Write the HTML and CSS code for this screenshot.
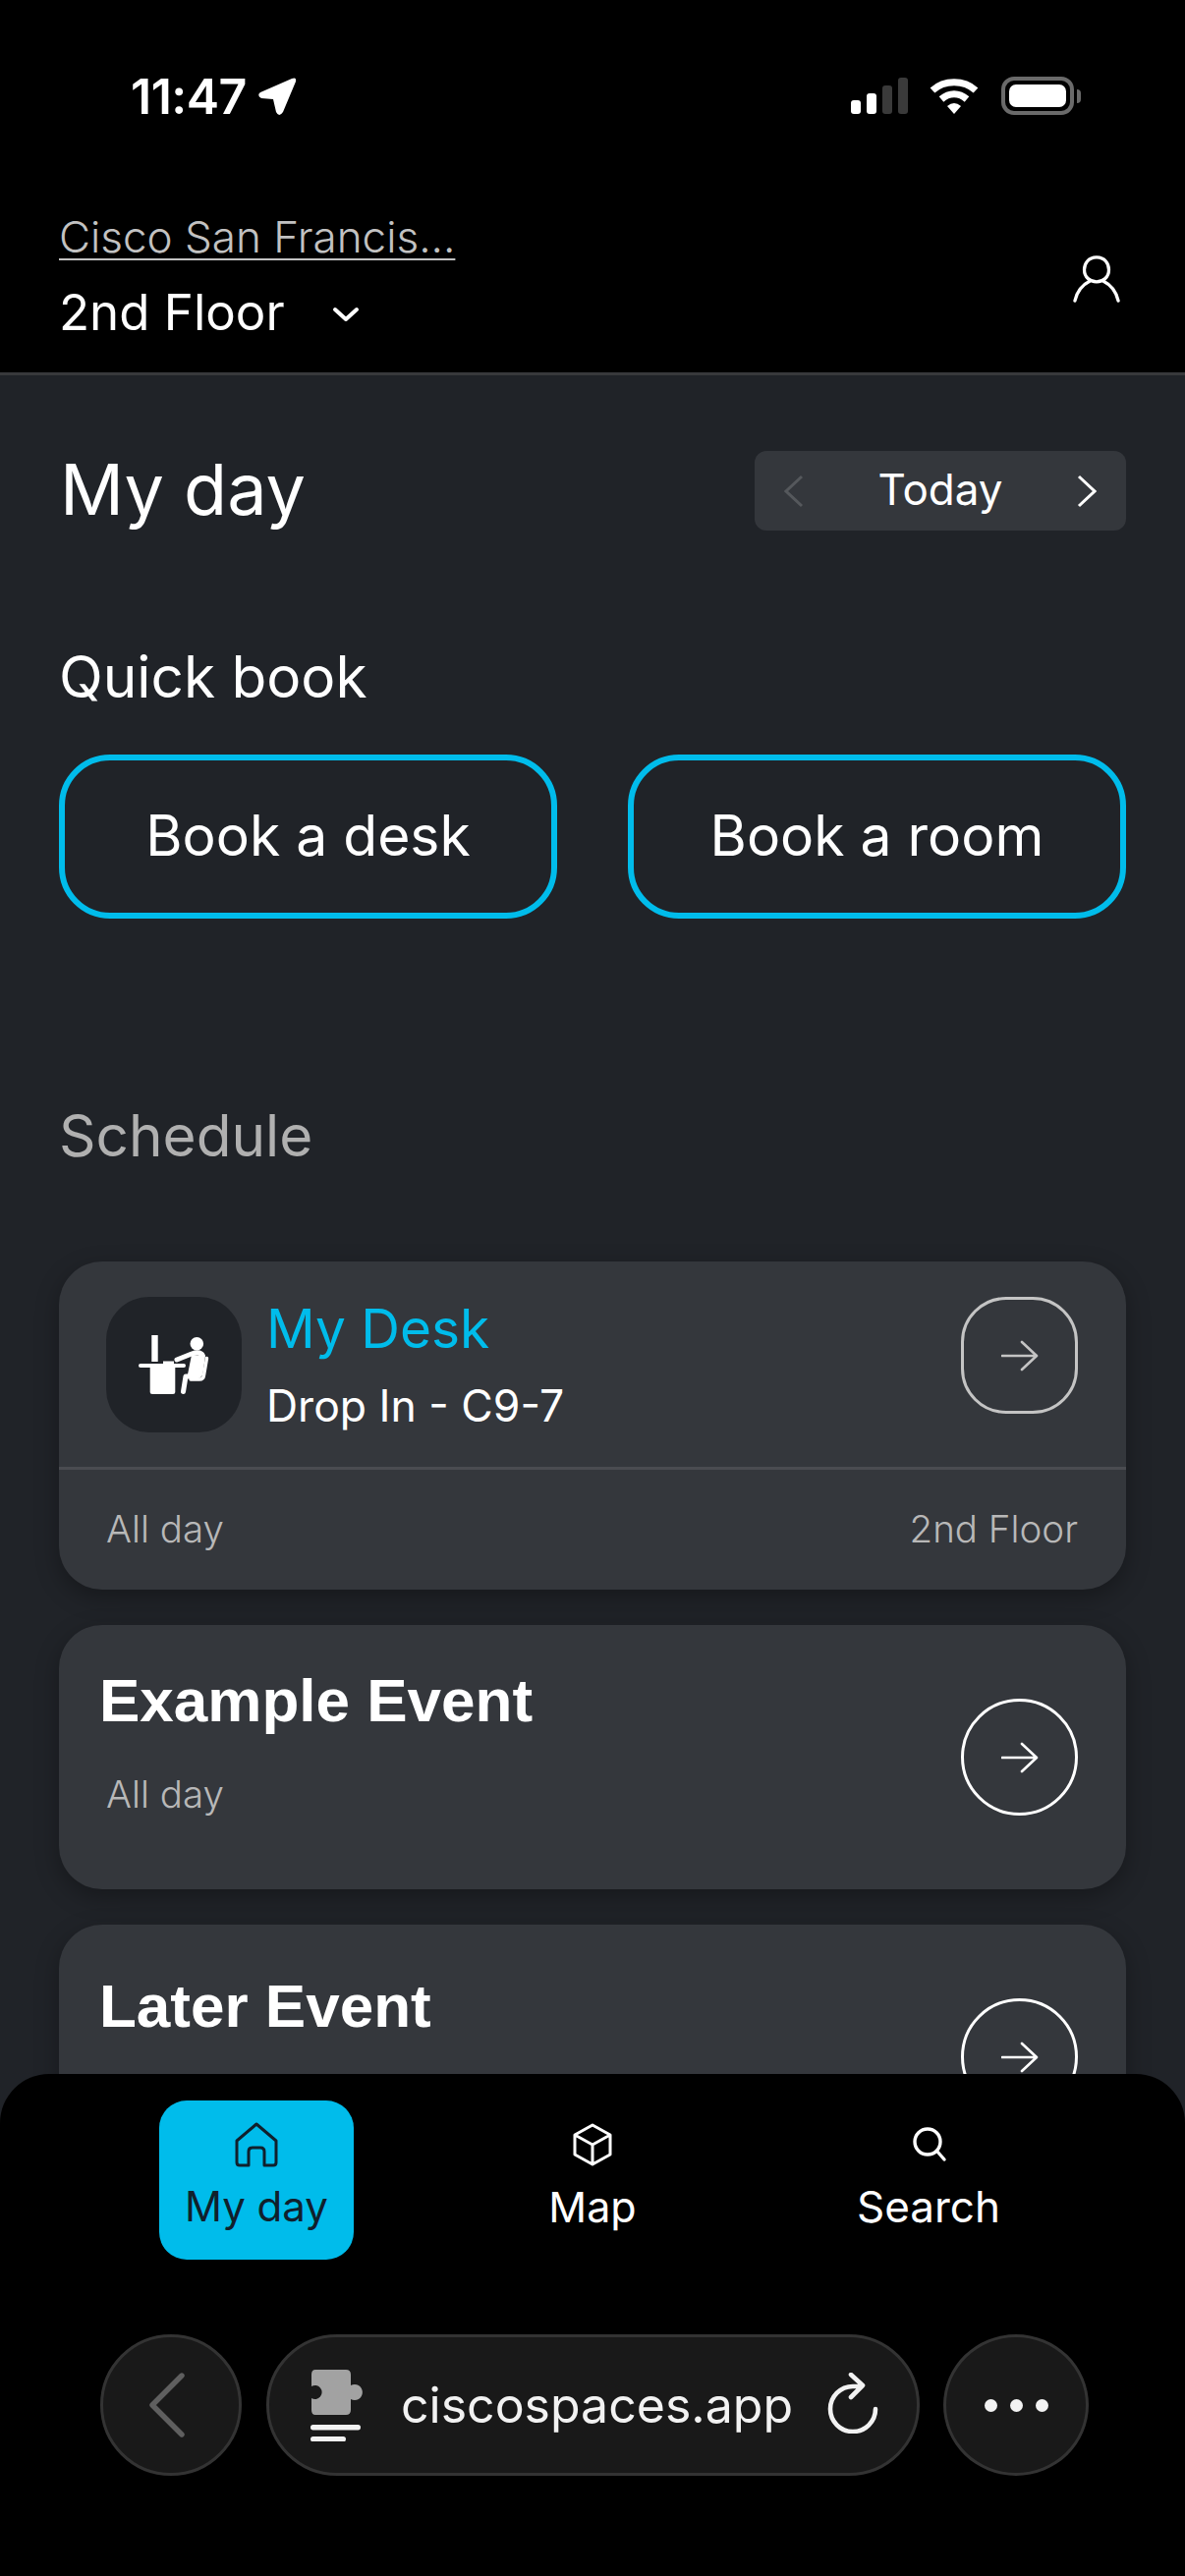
FILE: index.html
```html
<!DOCTYPE html>
<html lang="en">
<head>
    <meta charset="UTF-8">
    <meta name="viewport" content="width=device-width, initial-scale=1.0">
    <title>My day</title>
    <link rel="stylesheet" href="styles.css">
</head>
<body>
    <div class="phone">
        <header class="top">
            <div class="status">
                <div class="status-left">
                    <span class="clock">11:47</span>
                    <svg class="loc-arrow" viewBox="0 0 39 39"><path d="M2 15 L34 1 Q39 -1 38 4 L25 35 Q21 41 18 35 L15 22 L3 21 Q-2 18 2 15Z" fill="#fff"/></svg>
                </div>
                <div class="status-right">
                    <svg class="signal" viewBox="0 0 58 37">
                        <rect x="0" y="23" width="10" height="14" rx="3" fill="#fff"/>
                        <rect x="16" y="16" width="10" height="21" rx="3" fill="#fff"/>
                        <rect x="32" y="8" width="10" height="29" rx="3" fill="#3a3a3a"/>
                        <rect x="48" y="0" width="10" height="37" rx="3" fill="#3a3a3a"/>
                    </svg>
                    <svg class="wifi" viewBox="0 0 50 37">
                        <path d="M3 13 C15 2 35 2 47 13" fill="none" stroke="#fff" stroke-width="7"/>
                        <path d="M12 22 C20 15 30 15 38 22" fill="none" stroke="#fff" stroke-width="7"/>
                        <path d="M18 29 Q25 23 32 29 L25 37Z" fill="#fff"/>
                    </svg>
                    <div class="battery"><div class="battery-fill"></div></div>
                    <div class="battery-nub"></div>
                </div>
            </div>
            <div class="place-row">
                <div class="place">
                    <a class="site">Cisco San Francis...</a>
                    <div class="floor">
                        <span>2nd Floor</span>
                        <svg class="chevron" viewBox="0 0 28 16"><path d="M3 3 L14 13 L25 3" fill="none" stroke="#fff" stroke-width="4" stroke-linecap="round" stroke-linejoin="round"/></svg>
                    </div>
                </div>
                <svg class="user" viewBox="0 0 50 50"><path d="M25 2 C16 2 12 9 12 15 C12 23 18 28 25 28 C32 28 38 23 38 15 C38 9 34 2 25 2Z M18 27 C10 31 4 39 2 48 M32 27 C40 31 46 39 48 48" fill="none" stroke="#fff" stroke-width="3.4" stroke-linecap="round"/></svg>
            </div>
        </header>

        <main class="content">
            <div class="day-row">
                <h1>My day</h1>
                <div class="day-switch">
                    <svg class="day-arrow" viewBox="0 0 20 34"><path d="M18 2 L2 17 L18 32" fill="none" stroke="#55585c" stroke-width="3"/></svg>
                    <span class="day-label">Today</span>
                    <svg class="day-arrow" viewBox="0 0 20 34"><path d="M2 2 L18 17 L2 32" fill="none" stroke="#fff" stroke-width="3"/></svg>
                </div>
            </div>

            <h2 class="quick-title">Quick book</h2>
            <div class="quick-btns">
                <button class="quick-btn">Book a desk</button>
                <button class="quick-btn">Book a room</button>
            </div>

            <h2 class="schedule-title">Schedule</h2>

            <div class="card desk-card">
                <div class="desk-main">
                    <div class="desk-tile">
                        <svg viewBox="0 0 138 138">
                            <rect x="46.3" y="39" width="6.4" height="27" fill="#fff"/>
                            <rect x="33" y="68" width="48" height="4" rx="2" fill="#fff"/>
                            <rect x="58" y="65.5" width="11" height="3" fill="#fff"/>
                            <path d="M44.7 71 H70.3 V97 Q70.3 99 68 99 H47 Q44.7 99 44.7 97Z" fill="#fff"/>
                            <circle cx="92.3" cy="47.7" r="6.8" fill="#fff"/>
                            <path d="M72 64 L87 58 Q96 55 98.5 60 L96 78 Q95 81 91 81 H81 L78.5 96.5" fill="none" stroke="#fff" stroke-width="5" stroke-linecap="round" stroke-linejoin="round"/>
                            <path d="M87 59 L97 60 L94 79 H83 Z" fill="#fff"/>
                            <path d="M102.5 62.5 L99.5 80 Q99 84 95 84 H86" fill="none" stroke="#fff" stroke-width="3.4" stroke-linecap="round"/>
                        </svg>
                    </div>
                    <div class="desk-text">
                        <div class="desk-name">My Desk</div>
                        <div class="desk-seat">Drop In - C9-7</div>
                    </div>
                    <div class="go go-square">
                        <svg viewBox="0 0 38 32"><path d="M1 16 H35 M21 2 L36 16 L21 30" fill="none" stroke="#c4c4c4" stroke-width="2.6" stroke-linecap="round" stroke-linejoin="round"/></svg>
                    </div>
                </div>
                <div class="desk-foot">
                    <span>All day</span>
                    <span>2nd Floor</span>
                </div>
            </div>

            <div class="card event-card">
                <div class="event-text">
                    <div class="event-name">Example Event</div>
                    <div class="event-time">All day</div>
                </div>
                <div class="go go-round">
                    <svg viewBox="0 0 38 32"><path d="M1 16 H35 M21 2 L36 16 L21 30" fill="none" stroke="#fff" stroke-width="2.6" stroke-linecap="round" stroke-linejoin="round"/></svg>
                </div>
            </div>

            <div class="card event-card later">
                <div class="event-text">
                    <div class="event-name">Later Event</div>
                    <div class="event-time">All day</div>
                </div>
                <div class="go go-round">
                    <svg viewBox="0 0 38 32"><path d="M1 16 H35 M21 2 L36 16 L21 30" fill="none" stroke="#fff" stroke-width="2.6" stroke-linecap="round" stroke-linejoin="round"/></svg>
                </div>
            </div>
        </main>

        <div class="bottom">
            <nav class="tabs">
                <div class="tab active">
                    <svg viewBox="0 0 44 46"><path d="M22 2 L42 19 V41 Q42 44 39 44 H30 V30 Q30 26 26 26 H18 Q14 26 14 30 V44 H5 Q2 44 2 41 V19Z" fill="none" stroke="#10202c" stroke-width="3" stroke-linejoin="round"/></svg>
                    <span>My day</span>
                </div>
                <div class="tab">
                    <svg viewBox="0 0 44 46"><path d="M22 3 L40 13 V33 L22 43 L4 33 V13Z M4 13 L22 23 L40 13 M22 23 V43" fill="none" stroke="#fff" stroke-width="3" stroke-linejoin="round"/></svg>
                    <span>Map</span>
                </div>
                <div class="tab">
                    <svg viewBox="0 0 44 46"><circle cx="21" cy="20" r="13" fill="none" stroke="#fff" stroke-width="3.4"/><path d="M31 30 L38 38" stroke="#fff" stroke-width="3.4" stroke-linecap="round"/></svg>
                    <span class="search-label">Search</span>
                </div>
            </nav>
            <div class="browser">
                <div class="round-btn back">
                    <svg viewBox="0 0 36 66"><path d="M33 3 L3 33 L33 63" fill="none" stroke="#5f5f5f" stroke-width="5.4" stroke-linecap="round" stroke-linejoin="round"/></svg>
                </div>
                <div class="url-pill">
                    <svg class="puzzle" viewBox="0 0 53 73">
                        <path d="M5 0 H36 Q41 0 41 5 V16 A8 8 0 1 1 41 30 V41 Q41 46 36 46 H5 Q1 46 1 41 V29 A7 7 0 1 0 1 17 V5 Q1 0 5 0Z" fill="#a2a2a2"/>
                        <rect x="0" y="56" width="51" height="5.5" rx="2.7" fill="#f2f2f2"/>
                        <rect x="0" y="68" width="36" height="5.5" rx="2.7" fill="#f2f2f2"/>
                    </svg>
                    <span class="url">ciscospaces.app</span>
                    <svg class="reload" viewBox="0 0 52 62"><path d="M49 37 A23 23 0 1 1 26 14 H32 M24 2 L36 13 L24 25" fill="none" stroke="#f2f2f2" stroke-width="4.6" stroke-linecap="round" stroke-linejoin="round"/></svg>
                </div>
                <div class="round-btn more">
                    <span class="dot"></span><span class="dot"></span><span class="dot"></span>
                </div>
            </div>
        </div>
    </div>
</body>
</html>
```

FILE: styles.css
```css
html, body {
    margin: 0;
    padding: 0;
    background: #000;
}

.phone {
    width: 1206px;
    height: 2622px;
    position: relative;
    overflow: hidden;
    display: flex;
    flex-direction: column;
    font-family: 'Inter', 'Liberation Sans', sans-serif;
    color: #fff;
    background: #202328;
}

/* Top bar */
.top {
    background: #000;
    height: 382px;
    box-sizing: border-box;
    border-bottom: 3px solid #38393c;
    flex-shrink: 0;
}

.status {
    height: 216px;
    box-sizing: border-box;
    padding: 78px 106px 0 133px;
    display: flex;
    justify-content: space-between;
    align-items: flex-start;
}

.status-left {
    display: flex;
    align-items: center;
    gap: 12px;
}

.clock {
    font-size: 50px;
    line-height: 40px;
    font-weight: 600;
    letter-spacing: -0.5px;
}

.loc-arrow {
    width: 39px;
    height: 39px;
}

.status-right {
    display: flex;
    align-items: center;
}

.signal {
    width: 58px;
    height: 37px;
}

.wifi {
    width: 50px;
    height: 37px;
    margin-left: 22px;
}

.battery {
    width: 74px;
    height: 39px;
    box-sizing: border-box;
    margin-left: 23px;
    border: 4px solid #6a6a6a;
    border-radius: 13px;
    padding: 4px;
}

.battery-fill {
    height: 100%;
    background: #fff;
    border-radius: 7px;
}

.battery-nub {
    width: 4px;
    height: 14px;
    margin-left: 3px;
    background: #6a6a6a;
    border-radius: 0 4px 4px 0;
}

.place-row {
    padding: 0 65px 0 60px;
    display: flex;
    justify-content: space-between;
    align-items: center;
}

.site {
    display: block;
    font-size: 44px;
    line-height: 50px;
    font-weight: 300;
    color: #c2c2c2;
    text-decoration: underline;
    text-decoration-thickness: 2px;
    text-underline-offset: 6px;
}

.floor {
    margin-top: 27px;
    display: flex;
    align-items: center;
    font-size: 51px;
    line-height: 50px;
}

.chevron {
    width: 28px;
    height: 16px;
    margin-left: 48px;
    margin-top: 4px;
}

.user {
    width: 50px;
    height: 48px;
    margin-top: 8px;
}

/* Main content */
.content {
    padding: 0 60px;
    flex: 1;
}

.day-row {
    display: flex;
    justify-content: space-between;
    align-items: center;
    margin-top: 77px;
}

h1 {
    margin: 0 0 4px 1px;
    font-size: 72px;
    line-height: 77px;
    font-weight: 400;
}

.day-switch {
    width: 378px;
    height: 81px;
    box-sizing: border-box;
    padding: 0 30px;
    background: #34373c;
    border-radius: 12px;
    display: flex;
    justify-content: space-between;
    align-items: center;
    font-size: 44px;
}

.day-label {
    padding-bottom: 3px;
}

.day-arrow {
    width: 20px;
    height: 34px;
}

h2 {
    margin: 0;
    font-weight: 400;
}

.quick-title {
    margin-top: 114px;
    font-size: 58.5px;
    line-height: 70px;
}

.quick-btns {
    display: flex;
    justify-content: space-between;
    margin-top: 44px;
}

.quick-btn {
    width: 507px;
    height: 167px;
    background: transparent;
    border: 6px solid #00bceb;
    border-radius: 52px;
    color: #fff;
    font-family: inherit;
    font-size: 57px;
    padding: 0 0 3px;
}

.schedule-title {
    margin-top: 186px;
    font-size: 58.5px;
    line-height: 70px;
    color: #b0b0b0;
}

.card {
    background: #34373c;
    border-radius: 44px;
    box-shadow: 0 8px 24px rgba(0, 0, 0, 0.3);
}

.desk-card {
    margin-top: 93px;
    height: 334px;
    box-sizing: border-box;
    display: flex;
    flex-direction: column;
}

.desk-main {
    height: 212px;
    box-sizing: border-box;
    padding: 36px 49px 0 48px;
    border-bottom: 3px solid #4a4c51;
    display: flex;
    align-items: flex-start;
}

.desk-tile {
    width: 138px;
    height: 138px;
    background: #202328;
    border-radius: 44px;
}

.desk-tile svg {
    display: block;
    width: 138px;
    height: 138px;
}

.desk-text {
    flex: 1;
    margin-left: 25px;
}

.desk-name {
    font-size: 55px;
    line-height: 64px;
    color: #00bceb;
    margin-top: 0;
}

.desk-seat {
    font-size: 44.5px;
    line-height: 50px;
    margin-top: 22px;
}

.go {
    width: 119px;
    height: 119px;
    box-sizing: border-box;
    display: flex;
    justify-content: center;
    align-items: center;
    flex-shrink: 0;
}

.go svg {
    width: 38px;
    height: 32px;
}

.go-square {
    border: 3px solid #c4c4c4;
    border-radius: 46px;
}

.go-round {
    border: 3px solid #fff;
    border-radius: 50%;
}

.desk-foot {
    flex: 1;
    padding: 0 49px 3px 48px;
    display: flex;
    justify-content: space-between;
    align-items: center;
    font-size: 38.5px;
    font-weight: 300;
    color: #b8b8b8;
}

.event-card {
    margin-top: 36px;
    height: 269px;
    box-sizing: border-box;
    padding: 0 49px 0 41px;
    display: flex;
    justify-content: space-between;
    align-items: center;
}

.event-text {
    align-self: flex-start;
    padding-top: 42px;
}

.later .event-text {
    padding-top: 48px;
}

.event-name {
    font-family: 'Liberation Sans', Arial, sans-serif;
    font-weight: 700;
    font-size: 62px;
    line-height: 70px;
}

.event-time {
    margin: 38px 0 0 7px;
    font-size: 38.5px;
    line-height: 44px;
    font-weight: 300;
    color: #b8b8b8;
}

/* Bottom nav + browser bar, sits over the scrolling content */
.bottom {
    position: absolute;
    left: 0;
    right: 0;
    bottom: 0;
    height: 511px;
    background: #000;
    border-radius: 50px 50px 0 0;
}

.tabs {
    display: flex;
    justify-content: space-between;
    padding: 27px 162px 0;
    width: 882px;
}

.tab {
    width: 198px;
    height: 162px;
    border-radius: 28px;
    display: flex;
    flex-direction: column;
    align-items: center;
    font-size: 43px;
    color: #fff;
}

.tab svg {
    width: 44px;
    height: 46px;
    margin-top: 22px;
}

.tab span {
    margin-top: 14px;
    line-height: 52px;
}

.tab .search-label {
    font-size: 44px;
}

.tab.active {
    background: #00bceb;
    color: #10202c;
    font-size: 42px;
}

.browser {
    display: flex;
    align-items: center;
    padding-left: 102px;
    margin-top: 76px;
}

.round-btn {
    height: 144px;
    box-sizing: border-box;
    background: #191919;
    border: 3px solid #333;
    border-radius: 50%;
    display: flex;
    justify-content: center;
    align-items: center;
}

.back {
    width: 144px;
}

.back svg {
    width: 36px;
    height: 66px;
    margin-right: 8px;
}

.more {
    width: 148px;
    margin-left: 24px;
    gap: 13px;
}

.dot {
    width: 13px;
    height: 13px;
    background: #f2f2f2;
    border-radius: 50%;
}

.url-pill {
    width: 665px;
    height: 144px;
    box-sizing: border-box;
    margin-left: 25px;
    background: #191919;
    border: 3px solid #333;
    border-radius: 72px;
    display: flex;
    align-items: center;
    padding-left: 42px;
}

.puzzle {
    width: 53px;
    height: 73px;
    flex-shrink: 0;
}

.url {
    margin-left: 39px;
    font-size: 50px;
    color: #f2f2f2;
    white-space: nowrap;
}

.reload {
    width: 52px;
    height: 62px;
    margin-left: 35px;
    margin-bottom: 4px;
    flex-shrink: 0;
}
```
